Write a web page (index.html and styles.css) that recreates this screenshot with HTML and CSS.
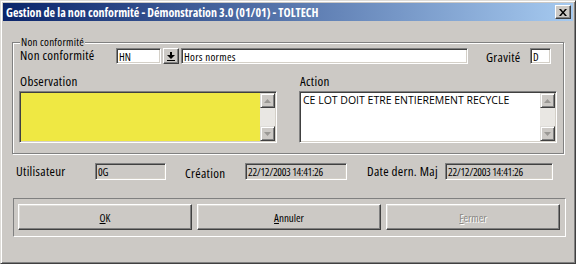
FILE: index.html
```html
<!DOCTYPE html>
<html lang="fr">
<head>
  <meta charset="UTF-8" />
  <title>Gestion de la non conformité</title>
  <link rel="stylesheet" href="styles.css">
</head>
<body>
  <div class="window">
    <div class="titlebar">
      <span class="title">Gestion de la non conformité - Démonstration 3.0 (01/01) - TOLTECH</span>
      <span class="close">
        <svg width="8" height="7" viewBox="0 0 8 7"><path d="M0 0h2l2 2.4L6 0h2L5 3.5 8 7H6L4 4.6 2 7H0l3-3.5z" fill="#000"/></svg>
      </span>
    </div>

    <div class="group">
      <div class="legend">Non conformité</div>
      <div class="row first">
        <label class="lbl lbl-nc">Non conformité</label>
        <input class="edit code" value="HN" readonly>
        <span class="combo-btn">
          <svg width="8" height="9" viewBox="0 0 8 9"><path d="M3 0h2v3h3L4 7 0 3h3z M0 8h8v1H0z" fill="#000"/></svg>
        </span>
        <input class="edit libelle" value="Hors normes" readonly>
        <label class="lbl lbl-grav">Gravité</label>
        <input class="edit grav" value="D" readonly>
      </div>

      <div class="row memos">
        <div class="memo-col">
          <div class="lbl">Observation</div>
          <div class="memo obs">
            <div class="memo-text"></div>
            <div class="scrollbar">
              <span class="sb-btn"><svg width="7" height="4" viewBox="0 0 7 4"><path d="M3.5 0L7 4H0z" fill="#9a9894"/></svg></span>
              <span class="sb-btn"><svg width="7" height="4" viewBox="0 0 7 4"><path d="M0 0h7L3.5 4z" fill="#9a9894"/></svg></span>
            </div>
          </div>
        </div>
        <div class="memo-col">
          <div class="lbl">Action</div>
          <div class="memo">
            <div class="memo-text">CE LOT DOIT ETRE ENTIEREMENT RECYCLE</div>
            <div class="scrollbar">
              <span class="sb-btn"><svg width="7" height="4" viewBox="0 0 7 4"><path d="M3.5 0L7 4H0z" fill="#9a9894"/></svg></span>
              <span class="sb-btn"><svg width="7" height="4" viewBox="0 0 7 4"><path d="M0 0h7L3.5 4z" fill="#9a9894"/></svg></span>
            </div>
          </div>
        </div>
      </div>
    </div>

    <div class="row info">
      <label class="lbl lbl-user">Utilisateur</label>
      <input class="edit ro user" value="0G" readonly>
      <label class="lbl lbl-crea">Création</label>
      <input class="edit ro date1" value="22/12/2003 14:41:26" readonly>
      <label class="lbl lbl-maj">Date dern. Maj</label>
      <input class="edit ro date2" value="22/12/2003 14:41:26" readonly>
    </div>

    <div class="buttons">
      <button class="btn ok"><u>O</u>K</button>
      <button class="btn cancel"><u>A</u>nnuler</button>
      <button class="btn quit" disabled><u>F</u>ermer</button>
    </div>
  </div>
</body>
</html>
```

FILE: styles.css
```css
body {
  margin: 0;
  background: #ccc9c5;
}

.window {
  box-sizing: border-box;
  width: 576px;
  height: 264px;
  padding: 2px;
  background: #ccc9c5;
  border: 1px solid;
  border-color: #dedcd8 #404040 #404040 #dedcd8;
  box-shadow: inset 1px 1px #fff, inset -1px -1px #808080;
  font-family: "Open Sans", "Liberation Sans", sans-serif;
  font-stretch: 75%;
  color: #000;
}

.titlebar {
  display: flex;
  align-items: center;
  justify-content: space-between;
  height: 18px;
  padding: 0 2px 0 3px;
  background: linear-gradient(to right, #0a246a, #a6caf0);
}

.title {
  color: #fff;
  font-weight: bold;
  font-size: 12px;
  white-space: nowrap;
}

.close {
  display: flex;
  align-items: center;
  justify-content: center;
  box-sizing: border-box;
  width: 16px;
  height: 14px;
  background: #ccc9c5;
  border: 1px solid;
  border-color: #fff #404040 #404040 #fff;
  box-shadow: inset -1px -1px #808080;
}

/* cadre "Non conformité" */
.group {
  margin: 21px 9px 0;
  padding: 0 6px 10px;
  border: 1px solid #808080;
  box-shadow: 1px 1px #fff, inset 1px 1px #fff;
}

.legend {
  width: max-content;
  margin: -7px 0 0 1px;
  padding: 0 1px;
  background: #ccc9c5;
  font-size: 11px;
  line-height: 11px;
  letter-spacing: 0.25px;
}

.row {
  display: flex;
  align-items: flex-start;
}

.first { margin-top: 1px; }

.lbl {
  box-sizing: border-box;
  padding-left: 1px;
  font-size: 13px;
  line-height: 13px;
  letter-spacing: 0.3px;
  white-space: nowrap;
}

.lbl-nc { width: 97px; margin-top: 1px; }
.lbl-grav { width: 45px; margin-left: 17px; margin-top: 3px; }

.edit {
  box-sizing: border-box;
  height: 16px;
  margin: 0;
  padding: 0 0 0 2px;
  font: inherit;
  font-size: 11px;
  color: #000;
  background: #fff;
  border: 1px solid;
  border-color: #808080 #fff #fff #808080;
  box-shadow: inset 1px 1px #404040, inset -1px -1px #d4d0c8;
  outline: none;
}

.code { width: 45px; }
.libelle { width: 287px; letter-spacing: 0.3px; }
.grav { width: 21px; }

.combo-btn {
  display: flex;
  align-items: center;
  justify-content: center;
  box-sizing: border-box;
  width: 16px;
  height: 16px;
  margin: 0 2px;
  background: #ccc9c5;
  border: 1px solid;
  border-color: #fff #404040 #404040 #fff;
  box-shadow: inset -1px -1px #808080;
}

.memos {
  margin-top: 11px;
  gap: 22px;
}

.memo-col { width: 258px; }
.memo-col .lbl { margin-bottom: 3px; }

.memo {
  display: flex;
  box-sizing: border-box;
  height: 52px;
  padding: 1px;
  background: #fff;
  border: 1px solid;
  border-color: #808080 #fff #fff #808080;
  box-shadow: inset 1px 1px #404040, inset -1px -1px #d4d0c8;
}

.memo.obs { background: #efe843; }

.memo-text {
  flex: 1;
  padding: 1px 2px;
  font-size: 10.5px;
  font-stretch: 90%;
  line-height: 13px;
}

.scrollbar {
  display: flex;
  flex-direction: column;
  justify-content: space-between;
  width: 15px;
  background: #e9e7e3;
}

.sb-btn {
  display: flex;
  align-items: center;
  justify-content: center;
  box-sizing: border-box;
  width: 15px;
  height: 15px;
  background: #ccc9c5;
  border: 1px solid;
  border-color: #dedcd8 #404040 #404040 #dedcd8;
  box-shadow: inset 1px 1px #fff, inset -1px -1px #808080;
}

/* ligne utilisateur / dates */
.info { margin: 8px 0 0 13px; }

.edit.ro {
  height: 17px;
  margin-top: 1px;
  background: #ccc9c5;
  letter-spacing: -0.3px;
}

.lbl-user { width: 79px; padding-left: 0; margin-top: 3px; }
.user { width: 71px; }
.lbl-crea { width: 61px; margin-left: 18px; margin-top: 5px; }
.date1 { width: 102px; }
.lbl-maj { width: 79px; margin-left: 19px; margin-top: 3px; }
.date2 { width: 108px; }

/* boutons */
.buttons {
  display: flex;
  gap: 5px;
  margin: 18px 7px 0 10px;
  padding: 5px 4px 6px;
  border: 1px solid;
  border-color: #808080 #fff #fff #808080;
}

.btn {
  box-sizing: border-box;
  height: 26px;
  padding: 0;
  font: inherit;
  font-size: 11px;
  color: #000;
  background: #ccc9c5;
  border: 1px solid;
  border-color: #fff #404040 #404040 #fff;
  box-shadow: inset -1px -1px #808080, inset 1px 1px #dedcd8;
}

.ok { width: 174px; }
.cancel { width: 184px; }
.quit { width: 174px; }

.btn:disabled {
  color: #8a8884;
  text-shadow: 1px 1px #fff;
}
```
